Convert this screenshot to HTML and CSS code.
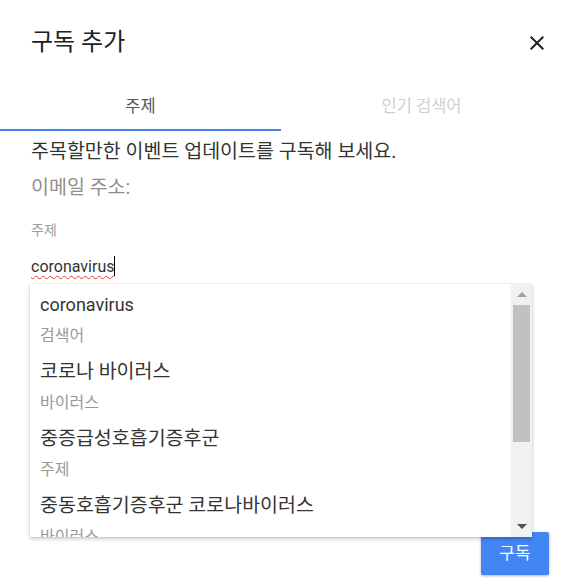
FILE: index.html
```html
<!DOCTYPE html>
<html lang="ko">
<head>
<meta charset="utf-8">
<link rel="stylesheet" href="styles.css">
</head>
<body>
<div class="dialog">
  <div class="header">
    <div class="title">구독 추가</div>
    <svg class="close" width="24" height="24" viewBox="0 0 24 24"><path d="M19 6.41L17.59 5 12 10.59 6.41 5 5 6.41 10.59 12 5 17.59 6.41 19 12 13.41 17.59 19 19 17.59 13.41 12z" fill="#202124"/></svg>
  </div>
  <div class="tabs">
    <div class="tab active">주제</div>
    <div class="tab">인기 검색어</div>
  </div>
  <div class="content">
    <div class="intro">주목할만한 이벤트 업데이트를 구독해 보세요.</div>
    <div class="intro muted">이메일 주소:</div>
    <div class="label">주제</div>
    <div class="input"><span class="typed">coronavirus</span><span class="caret"></span></div>
  </div>
  <div class="footer">
    <div class="btn">구독</div>
  </div>
  <div class="dropdown">
    <div class="list">
      <div class="item"><div class="main latin">coronavirus</div><div class="sub">검색어</div></div>
      <div class="item"><div class="main">코로나 바이러스</div><div class="sub">바이러스</div></div>
      <div class="item"><div class="main">중증급성호흡기증후군</div><div class="sub">주제</div></div>
      <div class="item"><div class="main">중동호흡기증후군 코로나바이러스</div><div class="sub">바이러스</div></div>
    </div>
    <div class="scrollbar">
      <div class="arrow up"></div>
      <div class="thumb"></div>
      <div class="track"></div>
      <div class="arrow down"></div>
    </div>
  </div>
</div>
</body>
</html>
```
FILE: styles.css
```css
html, body {
  margin: 0;
  padding: 0;
  background: #fff;
}
body {
  font-family: Roboto, "Noto Sans CJK KR", sans-serif;
  color: #333;
  width: 562px;
  height: 578px;
  overflow: hidden;
}
.dialog {
  position: relative;
  width: 562px;
  height: 578px;
}
.header {
  height: 83px;
  display: flex;
  align-items: center;
  justify-content: space-between;
  padding: 0 13px 0 31px;
}
.title {
  font-size: 24px;
  color: #202124;
  margin-top: -4px;
}
.close {
  display: block;
  margin-top: 2px;
}
.tabs {
  display: flex;
}
.tab {
  flex: 1;
  height: 46px;
  line-height: 47px;
  text-align: center;
  font-size: 16.5px;
  color: #d0d0d0;
  border-bottom: 2px solid transparent;
}
.tab.active {
  color: #555;
  border-bottom-color: #4285f4;
}
.content {
  padding: 3px 31px 0;
}
.intro {
  font-size: 19.5px;
  line-height: 36px;
  color: #333;
}
.intro.muted {
  color: #8f8f8f;
}
.label {
  margin-top: 14px;
  font-size: 14px;
  line-height: 20px;
  color: #9e9e9e;
}
.input {
  margin-top: 15px;
  height: 22px;
  display: flex;
  align-items: center;
  font-size: 16px;
  color: #333;
}
.typed {
  text-decoration: underline wavy #e53935;
  text-decoration-thickness: 1px;
  text-underline-offset: 3px;
  text-decoration-skip-ink: none;
}
.caret {
  width: 1px;
  height: 20px;
  background: #000;
}
.footer {
  display: flex;
  justify-content: flex-end;
  padding: 0 13px;
  margin-top: 255px;
}
.btn {
  width: 68px;
  height: 43px;
  line-height: 43px;
  text-align: center;
  background: #4285f4;
  color: #fff;
  font-size: 17px;
  border-radius: 2px;
  box-shadow: 0 1px 3px rgba(0,0,0,0.3);
}
.dropdown {
  position: absolute;
  left: 30px;
  top: 284px;
  width: 502px;
  height: 253px;
  background: #fff;
  display: flex;
  overflow: hidden;
  box-shadow: 0 2px 4px rgba(0,0,0,0.2), 0 0 2px rgba(0,0,0,0.12);
}
.list {
  flex: 1;
  overflow: hidden;
  padding-top: 2px;
}
.item {
  padding: 6px 10px 7px;
}
.main {
  font-size: 19.5px;
  line-height: 26px;
  color: #333;
}
.main.latin {
  font-size: 18px;
}
.sub {
  margin-top: 8px;
  font-size: 16px;
  line-height: 20px;
  color: #999;
}
.scrollbar {
  width: 21px;
  background: #f1f1f1;
  display: flex;
  flex-direction: column;
  align-items: center;
}
.arrow {
  width: 0;
  height: 0;
  border-left: 5px solid transparent;
  border-right: 5px solid transparent;
}
.arrow.up {
  margin-top: 8px;
  border-bottom: 5px solid #a3a3a3;
}
.thumb {
  margin-top: 8px;
  width: 17px;
  height: 137px;
  background: #c1c1c1;
}
.track {
  flex: 1;
}
.arrow.down {
  margin-bottom: 8px;
  border-top: 5px solid #505050;
}
```
